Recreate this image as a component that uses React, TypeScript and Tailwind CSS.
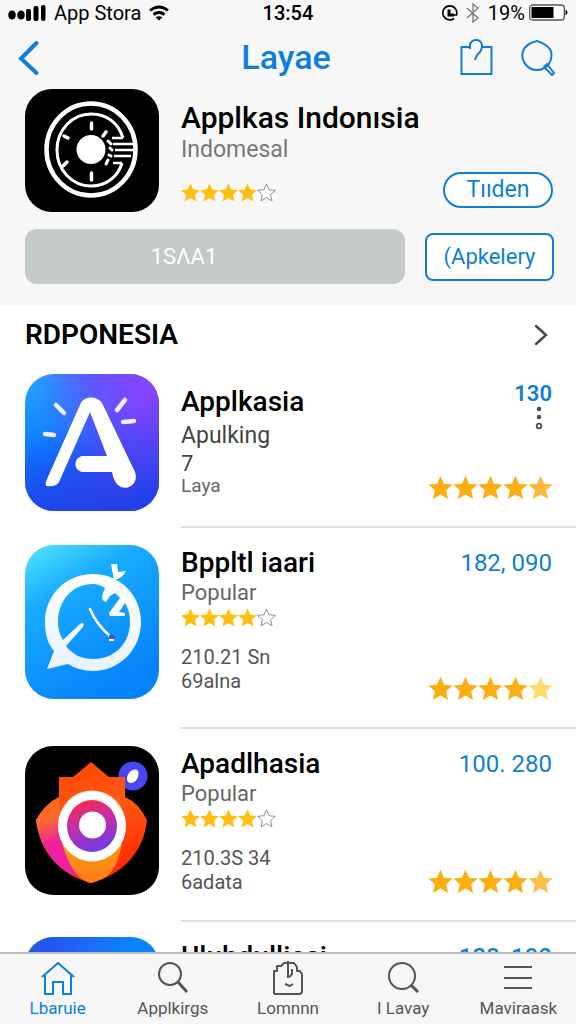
import type { ReactNode } from "react";

const STAR = "M12 1.2l3.2 7.3 8 .8-6 5.3 1.8 7.9-7-4.1-7 4.1 1.8-7.9-6-5.3 8-.8z";

function SmallStars() {
  return (
    <div className="flex h-6 items-center" role="img" aria-label="4 out of 5 stars">
      {[0, 1, 2, 3].map((i) => (
        <svg key={i} viewBox="0.8 0.800 22.400 22.400" className="size-[19px] fill-[#fdbf12]">
          <path d={STAR} />
        </svg>
      ))}
      <svg viewBox="0 0 24 24" className="size-[19px] fill-white stroke-[#8a8a8a]" strokeWidth="1.2">
        <path d={STAR} />
      </svg>
    </div>
  );
}

function LargeStars({ last }: { last: string }) {
  return (
    <div className="-mr-px flex" role="img" aria-label="Rating">
      {[0, 1, 2, 3].map((i) => (
        <svg key={i} viewBox="0.5 0.500 23 23" className="size-[25px] fill-[#fbae12]">
          <path d={STAR} />
        </svg>
      ))}
      <svg viewBox="0.5 0.500 23 23" className={`size-[25px] ${last}`}>
        <path d={STAR} />
      </svg>
    </div>
  );
}

function DialIcon() {
  return (
    <svg viewBox="0 0 134 123" className="h-[123px] w-[134px] shrink-0">
      <rect width="134" height="123" rx="27" />
      <g fill="none" stroke="#fff">
        <ellipse cx="66" cy="60.500" rx="44.500" ry="46" strokeWidth="4.500" />
        <path d="M98 49C93 33 81 25 66 25C47 25 32 41 32 61s15 36 34 36c15 0 27-9 31-23" strokeWidth="3" />
        <path d="M98 49H87M97 74H88M88 55h20M90 61h19M89 67h17" strokeWidth="2.500" />
        <path d="M66.500 34v6M66.500 84v7M39 47l4 2M38 77l4-4M81 43l-3 4" strokeWidth="3.500" strokeLinecap="round" />
        <path d="M83 52l3 3M85 59l2 2M84 66l2 1M81 75l2-4" strokeWidth="3" strokeLinecap="round" />
      </g>
      <circle cx="66" cy="60.500" r="14.500" fill="#fff" />
    </svg>
  );
}

function LetterIcon() {
  return (
    <svg viewBox="0 0 134 137" className="h-[137px] w-[134px] shrink-0">
      <defs>
        <linearGradient id="la" x1="0" y1="0" x2="0.300" y2="1">
          <stop offset="0" stopColor="#2ba7ff" />
          <stop offset="0.600" stopColor="#0878ff" />
          <stop offset="1" stopColor="#1554f2" />
        </linearGradient>
        <linearGradient id="lb" x1="0.150" y1="0.450" x2="0.850" y2="0.250">
          <stop offset="0" stopColor="#4a5bff" stopOpacity="0" />
          <stop offset="0.600" stopColor="#6a4cff" stopOpacity="0.850" />
          <stop offset="1" stopColor="#8245fd" />
        </linearGradient>
        <linearGradient id="lc" x1="0.350" y1="0.350" x2="0.550" y2="1">
          <stop offset="0" stopColor="#2540ec" stopOpacity="0" />
          <stop offset="1" stopColor="#2341e8" />
        </linearGradient>
      </defs>
      <rect width="134" height="137" rx="29" fill="url(#la)" />
      <rect width="134" height="137" rx="29" fill="url(#lb)" />
      <rect width="134" height="137" rx="29" fill="url(#lc)" />
      <path
        d="M55 31C58 21 74 21 78 31L110 98C114 110 103 116 96 113Q89 110 87 98H58C48 97 48 83 58 82H82L65 38L34 108Q32 113 21 112Q20 109 22 105Z"
        fill="#fff"
      />
      <g stroke="#f1edff" strokeWidth="4.500" strokeLinecap="round">
        <path d="M31 31l8 8M20 60l9 1M100 26l-8 10M98 48l11-1" />
      </g>
    </svg>
  );
}

function ChatClockIcon() {
  return (
    <svg viewBox="0 0 134 154" className="h-[154px] w-[134px] shrink-0">
      <defs>
        <linearGradient id="ca" x1="0" y1="0" x2="0.500" y2="1">
          <stop offset="0" stopColor="#55e5ff" />
          <stop offset="0.350" stopColor="#18abff" />
          <stop offset="1" stopColor="#0783fa" />
        </linearGradient>
        <linearGradient id="cb" x1="0" y1="0" x2="0" y2="1">
          <stop offset="0" stopColor="#fff" />
          <stop offset="1" stopColor="#e7f2ff" />
        </linearGradient>
      </defs>
      <rect width="134" height="154" rx="29" fill="url(#ca)" />
      <path
        fillRule="evenodd"
        fill="url(#cb)"
        d="M68 29C95 29 116 50 116 77s-21 49-48 49q-14 0-25-7L22 124l7-18C23 99 20 90 20 77c0-27 21-48 48-48Zm0 10C47 39 33 56 33 77q0 10 5 18L55 79q5-3 3 3L41 101c7 9 16 13 27 13 22 0 37-16 37-37q0-11-5-19L94 67l6 1v3H85l-1-3 11-15-5-5-5 3-4 6q-6-2-3-9l2-5Q74 39 68 39Z"
      />
      <path d="M86 19h6l1 8 8-1q-3 7-12 9Z" fill="#fff" />
      <path d="M65 64q6 15 20 27" fill="none" stroke="#fff" strokeWidth="2.500" strokeLinecap="round" />
      <circle cx="87" cy="92" r="3" fill="#4b58bb" />
      <path d="M84 95h5" stroke="#fff" strokeWidth="2" />
    </svg>
  );
}

function ShieldIcon() {
  return (
    <svg viewBox="0 0 134 149" className="h-[149px] w-[134px] shrink-0">
      <defs>
        <linearGradient id="sa" x1="0.200" y1="0" x2="0.500" y2="1">
          <stop offset="0" stopColor="#ff4400" />
          <stop offset="0.450" stopColor="#ff5a14" />
          <stop offset="1" stopColor="#ff2600" />
        </linearGradient>
        <linearGradient id="sb" x1="0.400" y1="0" x2="0.600" y2="1">
          <stop offset="0" stopColor="#ff6512" />
          <stop offset="0.250" stopColor="#fb6a30" />
          <stop offset="0.550" stopColor="#ee2199" />
          <stop offset="1" stopColor="#ed1dab" />
        </linearGradient>
        <linearGradient id="sc" x1="0" y1="0" x2="0.300" y2="1">
          <stop offset="0" stopColor="#ff2a35" />
          <stop offset="0.500" stopColor="#c72ca8" />
          <stop offset="1" stopColor="#783bdc" />
        </linearGradient>
        <linearGradient id="sd" x1="0" y1="0" x2="0" y2="1">
          <stop offset="0" stopColor="#ff9c0c" />
          <stop offset="1" stopColor="#ff7a18" />
        </linearGradient>
      </defs>
      <rect width="134" height="149" rx="28" />
      <circle cx="108" cy="30" r="14.500" fill="#4748f2" />
      <path d="M102 33c0-7 8-12 11-8 2 5-2 12-7 12q-4 0-4-4Z" fill="#fff" />
      <path d="M66 16 84 31h16v20q14 6 22 23C119 106 97 129 66 137 35 129 15 106 11 74q9-16 23-23V31h14Z" fill="url(#sa)" />
      <path d="M34 51Q20 58 11 74c4 30 20 49 43 57L38 96Z" fill="url(#sb)" />
      <path d="M37 97h60Q92 123 82 130 75 135 66 137 47 133 37 97Z" fill="url(#sd)" />
      <ellipse cx="67" cy="80" rx="34" ry="35.500" fill="#fff" />
      <ellipse cx="67" cy="80" rx="25" ry="26" fill="url(#sc)" />
      <circle cx="67.500" cy="79" r="13.500" fill="#fff" />
    </svg>
  );
}

function BlueIcon() {
  return <div className="h-[140px] w-[134px] shrink-0 rounded-[28px] bg-linear-to-r from-[#2456ee] from-20% to-[#0783ff] to-80%" />;
}

function AppRow({
  icon,
  title,
  price,
  last,
  className,
  priceClass = "text-2xl leading-9",
  textClass = "",
  more,
  children,
}: {
  icon: ReactNode;
  title: string;
  price: string;
  last: string;
  className: string;
  priceClass?: string;
  textClass?: string;
  more?: boolean;
  children?: ReactNode;
}) {
  return (
    <li className="flex gap-[22px] pl-[25px]">
      <div className={className}>{icon}</div>
      <div className="mt-[17px] flex min-w-0 flex-1 justify-between border-b-2 border-[#dedede] pr-6 pb-[26px]">
        <div className={`min-w-0 ${textClass}`}>
          <h3 className="text-[28px] leading-9 font-medium whitespace-nowrap text-black">{title}</h3>
          {children}
        </div>
        <div className="flex shrink-0 flex-col items-end">
          <span className={`text-[#0f7edb] ${priceClass}`}>{price}</span>
          {more && (
            <button type="button" aria-label="More options" className="mr-2 -mt-2">
              <svg viewBox="0 0 10 26" className="h-[26px] w-[10px]" fill="#4a5058">
                <circle cx="5" cy="3" r="2.300" />
                <circle cx="5" cy="11" r="2.300" />
                <circle cx="5" cy="20" r="2.300" fill="#fff" stroke="#4a5058" strokeWidth="1.800" />
              </svg>
            </button>
          )}
          <div className="mt-auto">
            <LargeStars last={last} />
          </div>
        </div>
      </div>
    </li>
  );
}

function Details({ first, second }: { first: string; second: string }) {
  return (
    <>
      <p className="text-[22px] leading-6 text-[#666]">Popular</p>
      <SmallStars />
      <p className="mt-4 text-xl leading-6 text-[#555]">{first}</p>
      <p className="text-xl leading-6 text-[#555]">{second}</p>
    </>
  );
}

function Tab({ label, active, children }: { label: string; active?: boolean; children: ReactNode }) {
  return (
    <li className="min-w-0 flex-1">
      <a
        href="#"
        aria-current={active ? "page" : undefined}
        className={`flex flex-col items-center pt-1.5 ${active ? "text-[#0f7edb]" : "text-[#555]"}`}
      >
        <svg viewBox="0 0 36 36" className="size-9" fill="none" stroke="currentColor" strokeWidth="2" strokeLinejoin="round">
          {children}
        </svg>
        <span className="text-[17px] leading-6">{label}</span>
      </a>
    </li>
  );
}

export default function App() {
  return (
    <div className="flex h-screen flex-col overflow-hidden bg-white font-[Roboto,sans-serif] text-black">
      <header className="shrink-0 bg-[#f7f7f7] pb-[21px]">
        <div className="grid h-[25px] grid-cols-3 items-center pr-2 pl-2 text-xl leading-6">
          <div className="flex items-center gap-2">
            <svg viewBox="0 0 38 18" className="h-[18px] w-[38px] shrink-0">
              <ellipse cx="4" cy="11" rx="3.800" ry="4.500" />
              <ellipse cx="13" cy="11" rx="3.800" ry="4.500" />
              <rect x="18" y="5" width="5" height="12" rx="2" />
              <rect x="25.500" y="2" width="5" height="15" rx="2" />
              <rect x="33" y="1" width="4.500" height="16" rx="2" />
            </svg>
            <span className="whitespace-nowrap">App Stora</span>
            <svg viewBox="0 0 20 16" className="h-4 w-5 shrink-0" fill="none" stroke="#000" strokeWidth="2.800">
              <path d="M1 5.500Q10-1.500 19 5.500M4.500 9.500q5.500-4 11 0" />
              <path d="M6.500 12.300q3.500-2 7 0L10 15.500Z" fill="#000" stroke="none" />
            </svg>
          </div>
          <span className="text-center font-medium">13:54</span>
          <div className="flex items-center justify-end gap-1">
            <svg viewBox="0 0 16 16" className="mr-1 size-4 shrink-0" fill="none" stroke="#000" strokeWidth="1.600">
              <path d="M12 13.500A7 7 0 1 1 14.500 10H7" />
              <path d="M7 4.500V10h5" strokeWidth="3" />
            </svg>
            <svg viewBox="0 0 14 22" className="mr-1 h-[22px] w-[14px] shrink-0" fill="none" stroke="#777" strokeWidth="1.300">
              <path d="M1 6l11 10-5 4V2l5 4L1 16" />
            </svg>
            <span>19%</span>
            <svg viewBox="0 0 39 17" className="h-[17px] w-[39px] shrink-0">
              <rect x="0.700" y="1" width="34.600" height="15" rx="3" fill="#fff" stroke="#555" strokeWidth="1.300" />
              <rect x="2.500" y="3" width="22" height="11" />
              <path d="M36.500 5.500q4 3 0 6Z" />
            </svg>
          </div>
        </div>

        <div className="grid h-16 grid-cols-[1fr_auto_1fr] items-center pr-[21px] pl-[17px]">
          <button type="button" aria-label="Back" className="justify-self-start text-[#0f7edb]">
            <svg viewBox="0 0 24 38" className="h-[38px] w-6" fill="none" stroke="currentColor" strokeWidth="4" strokeLinecap="round">
              <path d="M19.500 5 4 20.500 19.500 35" />
            </svg>
          </button>
          <h1 className="text-[34px] leading-10 font-medium text-[#0f7edb]">Layae</h1>
          <div className="flex gap-[27px] justify-self-end text-[#0f7edb]">
            <button type="button" aria-label="Share">
              <svg viewBox="0 0 34 38" className="h-[38px] w-[34px]" fill="none" stroke="currentColor" strokeWidth="2">
                <path d="M10 9H1.500v27h30V9H22M10 11V6q2-4 6-4 5 0 6 5 0 6-4 9-2 2-3 6" />
              </svg>
            </button>
            <button type="button" aria-label="Search">
              <svg viewBox="0 0 34 38" className="h-[38px] w-[34px]" fill="none" stroke="currentColor" strokeWidth="2">
                <path d="M16 3c4 1 12 5 14 10 2 9-3 19-14 19C5 32-2 20 3 11 6 6 12 4 16 3Z" />
                <path d="m23 29 3-3 7 9-2 2Z" />
              </svg>
            </button>
          </div>
        </div>

        <div className="flex gap-[22px] pr-[23px] pl-[25px]">
          <DialIcon />
          <div className="min-w-0 flex-1 pt-[11px]">
            <h2 className="text-[30px] leading-9 font-medium whitespace-nowrap">Applkas Indonısia</h2>
            <div className="flex items-end justify-between">
              <div>
                <p className="text-[23px] leading-7 text-[#777]">Indomesal</p>
                <div className="mt-4">
                  <SmallStars />
                </div>
              </div>
              <button type="button" className="-mb-1 h-9 w-[110px] rounded-full border-2 border-[#0f7edb] bg-white text-[23px] leading-7 text-[#0f7edb]">
                Tııden
              </button>
            </div>
          </div>
        </div>

        <div className="mt-[17px] flex items-center gap-5 pr-[22px] pl-[25px]">
          <button type="button" className="h-[55px] flex-1 rounded-xl bg-[#c4c9c9] pr-[62px] text-[22px] leading-7 text-white">
            1SΛA1
          </button>
          <button type="button" className="h-12 w-[129px] rounded-lg border-2 border-[#0f7edb] bg-white text-[22px] leading-7 text-[#0f7edb]">
            (Apkelery
          </button>
        </div>
      </header>

      <main className="min-h-0 flex-1 overflow-hidden">
        <div className="flex h-[52px] items-center justify-between pt-2 pr-7 pl-[25px]">
          <h2 className="text-[28px] leading-9 font-semibold">RDPONESIA</h2>
          <button type="button" aria-label="See all">
            <svg viewBox="0 0 14 22" className="h-[22px] w-[14px]" fill="none" stroke="#4a4a4a" strokeWidth="2.500" strokeLinecap="round">
              <path d="m2 2 10 9-10 9" />
            </svg>
          </button>
        </div>
        <ul>
          <AppRow
            icon={<LetterIcon />}
            title="Applkasia"
            price="130"
            priceClass="text-[22px] leading-10 font-semibold"
            last="fill-[#fbb83f]"
            className="pt-[17px] pb-[17px]"
            textClass="pt-[10px]"
            more
          >
            <p className="text-[23px] leading-8 text-[#444]">Apulking</p>
            <p className="-mb-1 text-[22px] leading-6 text-[#444]">7</p>
            <p className="-mb-6 text-[19px] leading-7 text-[#666]">Laya</p>
          </AppRow>
          <AppRow icon={<ChatClockIcon />} title="Bppltl iaari" price="182, 090" last="fill-[#fddd6c]" className="pt-[17px] pb-[30px]">
            <Details first="210.21 Sn" second="69alna" />
          </AppRow>
          <AppRow icon={<ShieldIcon />} title="Apadlhasia" price="100. 280" last="fill-[#fbc04a]" className="pt-[17px] pb-[26px]">
            <Details first="210.3S 34" second="6adata" />
          </AppRow>
          <AppRow icon={<BlueIcon />} title="Uluhdulliasi" price="128, 190" priceClass="text-2xl leading-9 font-medium" last="fill-[#fbc04a]" className="pt-[15px] pb-7">
            <Details first="210.35 34" second="6adata" />
          </AppRow>
        </ul>
      </main>

      <nav className="h-[72px] shrink-0 border-t-2 border-[#bdbdbd] bg-[#f6f6f6]">
        <ul className="flex">
          <Tab label="Lbaruie" active>
            <path d="M2 17 18 3l16 14M5 14v20h8V22h10v12h8V14" />
          </Tab>
          <Tab label="Applkirgs">
            <circle cx="15" cy="14" r="11" />
            <path d="m23 22 9 10" strokeWidth="3" />
          </Tab>
          <Tab label="Lomnnn">
            <path d="M4 34V11h3V6h4l3-3h3M19 3h5l3 4v4h3l2 3v17q0 3-3 3H4M18 1v10M18 11v6M22 9v5q-1 3-5 3M15 24l5 2 3-2" />
          </Tab>
          <Tab label="I Lavay">
            <circle cx="17" cy="16" r="13" />
            <path d="m26 25 7 7" strokeWidth="3" />
          </Tab>
          <Tab label="Maviraask">
            <path d="M4 7h28M4 18h28M4 28h28" />
          </Tab>
        </ul>
      </nav>
    </div>
  );
}
